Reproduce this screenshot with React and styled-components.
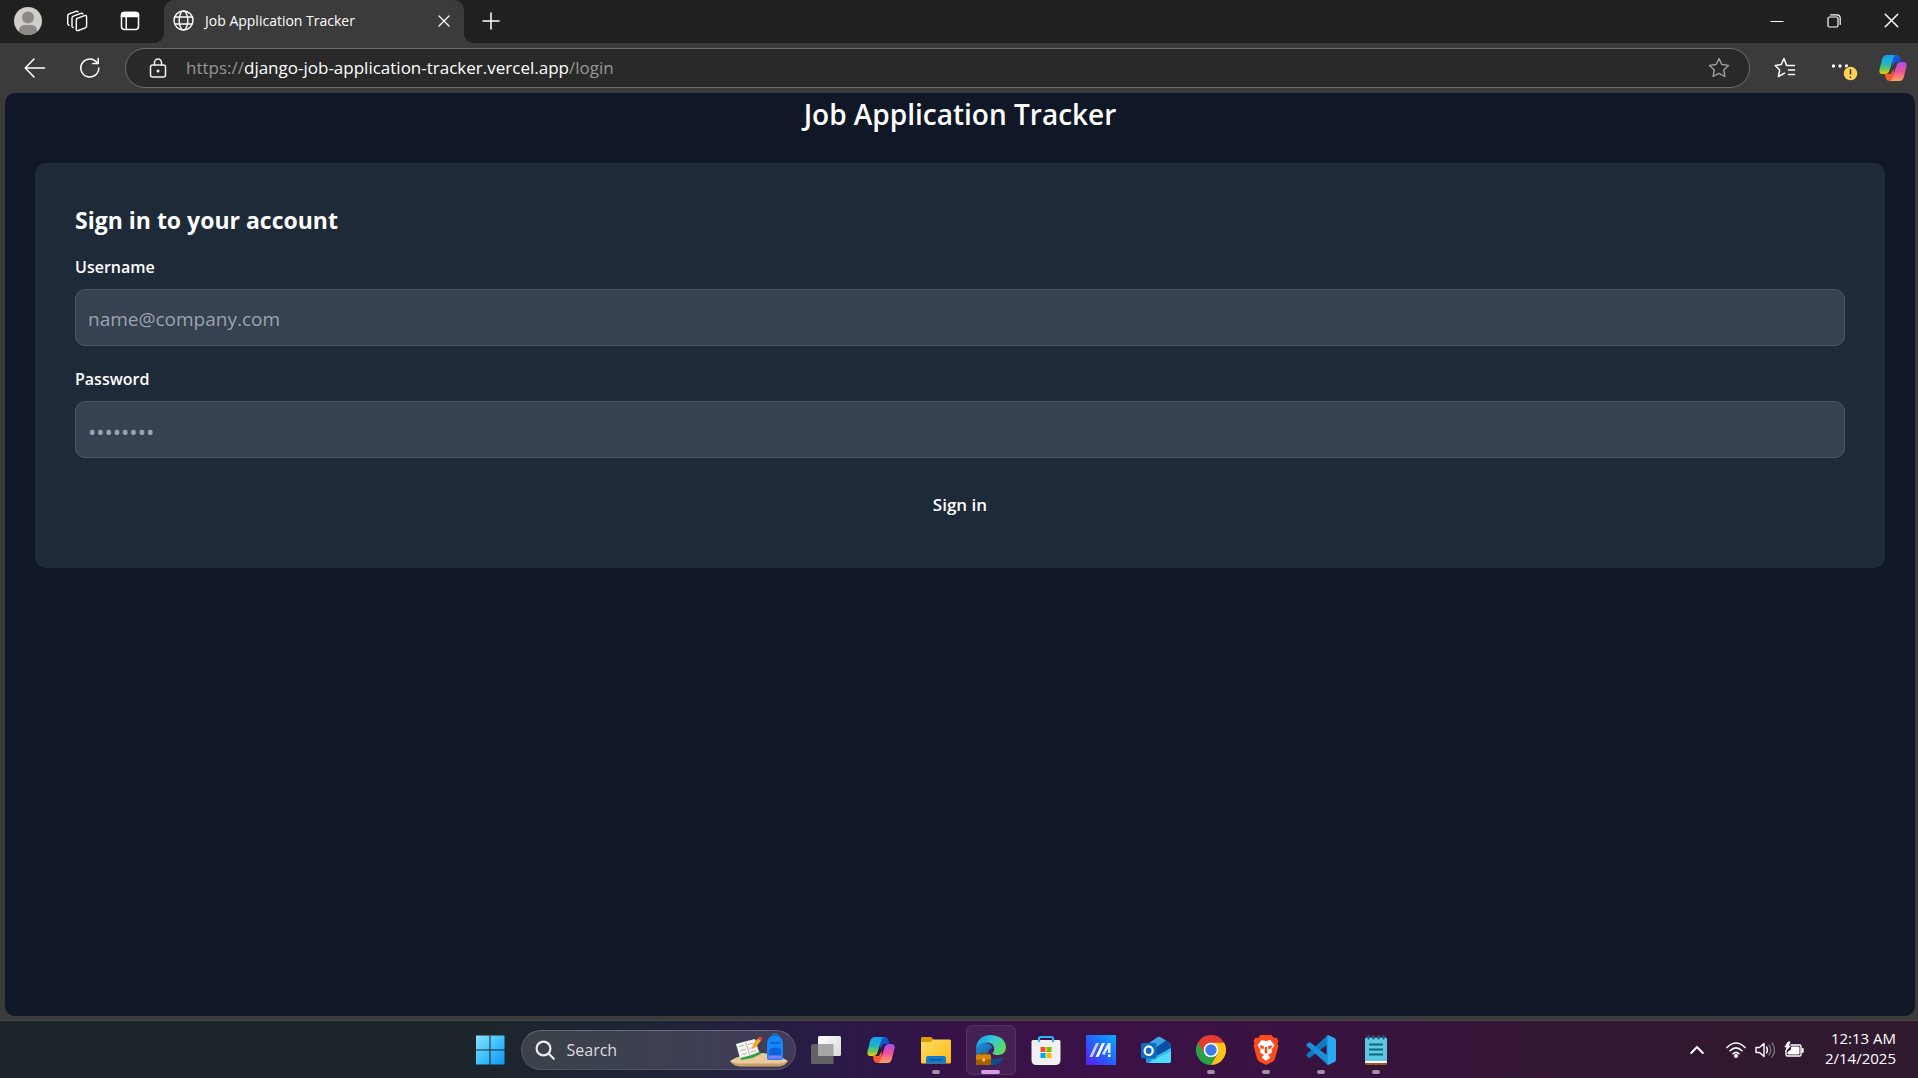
import React from "react";
import styled, { createGlobalStyle } from "styled-components";

const GlobalStyle = createGlobalStyle`
  *, *::before, *::after { box-sizing: border-box; }
  body {
    margin: 0;
    background: #3b3b3b;
    color: #fff;
    font-family: "Open Sans", "Noto Sans", sans-serif;
  }
  button, input { font: inherit; color: inherit; }
  svg { display: block; flex: none; }
`;

const Desktop = styled.div`
  display: flex;
  flex-direction: column;
  height: 100vh;
  overflow: hidden;
`;

/* ---------- Browser chrome ---------- */

const TabStrip = styled.header`
  display: flex;
  align-items: stretch;
  height: 43px;
  background: #202020;
`;

const ChromeButton = styled.button`
  display: grid;
  place-items: center;
  width: ${(p) => p.$width || 52}px;
  padding: 0;
  border: 0;
  background: transparent;

  ${TabStrip} & { padding-bottom: 2px; }
`;

const ProfileActions = styled.div`
  display: flex;
  padding: 0 4px 0 2px;
`;

const Tab = styled.div`
  position: relative;
  display: flex;
  align-items: center;
  width: 300px;
  padding: 0 9px 2px;
  gap: 11px;
  border-radius: 10px 10px 0 0;
  background: #3b3b3b;
  font-size: 14px;
  line-height: 20px;

  &::before,
  &::after {
    content: "";
    position: absolute;
    bottom: 0;
    width: 10px;
    height: 10px;
  }
  &::before {
    right: 100%;
    background: radial-gradient(circle at 0 0, transparent 10px, #3b3b3b 10px);
  }
  &::after {
    left: 100%;
    background: radial-gradient(circle at 100% 0, transparent 10px, #3b3b3b 10px);
  }
`;

const TabTitle = styled.span`
  flex: 1;
  white-space: nowrap;
`;

const TabClose = styled.button`
  display: grid;
  place-items: center;
  width: 22px;
  height: 22px;
  padding: 0;
  border: 0;
  background: transparent;
`;

const WindowControls = styled.div`
  display: flex;
  margin-left: auto;
`;

const Toolbar = styled.nav`
  display: flex;
  align-items: center;
  height: 50px;
  padding: 0 0 0 7px;

  & > button { height: 40px; }
`;

const AddressBar = styled.div`
  display: flex;
  flex: 1;
  align-items: center;
  height: 40px;
  margin-left: 8px;
  padding: 0 19px 0 23px;
  border: 1px solid #6b6b6b;
  border-radius: 20px;
  background: #292929;
`;

const Url = styled.a`
  flex: 1;
  margin-left: 19px;
  color: #969696;
  font-size: 17px;
  line-height: 24px;
  text-decoration: none;
  white-space: nowrap;
`;

const Host = styled.span`
  color: #fff;
`;

/* ---------- Web page ---------- */

const Page = styled.main`
  flex: 1;
  min-height: 0;
  margin: 0 3px 4px 5px;
  padding: 0 30px;
  border-radius: 10px;
  background: #101726;
`;

const SiteTitle = styled.h1`
  margin: 0 0 27px;
  font-size: 28px;
  font-weight: 600;
  line-height: 43px;
  text-align: center;
`;

const Card = styled.section`
  padding: 40px;
  border-radius: 10px;
  background: #1e2a38;
`;

const CardTitle = styled.h2`
  margin: 0 0 16px;
  font-size: 23px;
  font-weight: 700;
  line-height: 35px;
`;

const Form = styled.form`
  display: flex;
  flex-direction: column;
  gap: 20px;
`;

const Field = styled.div`
  display: flex;
  flex-direction: column;
  gap: 8px;
`;

const Label = styled.label`
  font-size: 16px;
  font-weight: 600;
  line-height: 27px;
`;

const Input = styled.input`
  width: 100%;
  height: 57px;
  padding: 2px 12px 0;
  border: 1px solid #4b5563;
  border-radius: 10px;
  background: #364152;
  font-size: ${(p) => (p.type === "password" ? 22 : 19)}px;
  line-height: 30px;
  outline: none;

  &::placeholder { color: #9ca3af; opacity: 1; }
`;

const SubmitButton = styled.button`
  width: 100%;
  height: 50px;
  padding: 2px 25px 0;
  border: 0;
  border-radius: 10px;
  background: transparent;
  font-size: 17px;
  font-weight: 600;
  line-height: 25px;
`;

/* ---------- Taskbar ---------- */

const Taskbar = styled.footer`
  display: flex;
  height: 58px;
  border-top: 1px solid #494449;
  background: linear-gradient(
    90deg,
    #1c242a 0%,
    #1c252b 25%,
    #20233a 36%,
    #2a1947 44%,
    #361248 50%,
    #3b1146 58%,
    #37133f 70%,
    #321730 84%,
    #2f1a2e 100%
  );
`;

const Spacer = styled.div`
  flex: 1 1 0;
`;

const AppRow = styled.div`
  display: flex;
  align-items: center;
  gap: 5px;
`;

const AppButton = styled.button`
  position: relative;
  display: grid;
  place-items: center;
  width: 50px;
  height: 50px;
  padding: 0;
  border: 1px solid ${(p) => (p.$active ? "#ffffff14" : "transparent")};
  border-radius: 6px;
  background: ${(p) => (p.$active ? "#ffffff12" : "transparent")};

  &::after {
    content: "";
    position: absolute;
    bottom: 0;
    display: ${(p) => (p.$running ? "block" : "none")};
    width: ${(p) => (p.$active ? 19 : 8)}px;
    height: 4px;
    border-radius: 2px;
    background: ${(p) => (p.$active ? "#da9ce5" : "#a08fa5")};
  }
`;

const SearchBox = styled.label`
  display: flex;
  align-items: center;
  width: 275px;
  height: 40px;
  padding: 0 7px 0 13px;
  gap: 12px;
  border: 1px solid #ffffff1c;
  border-top-color: #ffffff38;
  border-radius: 20px;
  background: #ffffff22;
`;

const SearchInput = styled.input`
  flex: 1;
  min-width: 0;
  padding: 0;
  border: 0;
  background: transparent;
  font-size: 16px;
  line-height: 24px;
  outline: none;

  &::placeholder { color: #dcdcde; opacity: 1; }
`;

const Tray = styled.div`
  display: flex;
  flex: 1 1 52px;
  align-items: center;
  justify-content: flex-end;
  padding-right: 22px;
`;

const TrayButton = styled.button`
  display: flex;
  align-items: center;
  height: 40px;
  padding: 0 11px;
  gap: 9px;
  border: 0;
  background: transparent;
`;

const Clock = styled.time`
  margin-left: 10px;
  padding-bottom: 3px;
  font-size: 15px;
  line-height: 20px;
  text-align: right;
  white-space: nowrap;
`;

/* ---------- Icons ---------- */

const Line = ({ w, h = w, box, stroke = "#fff", sw = 1.5, children }) => (
  <svg width={w} height={h} viewBox={box || `0 0 ${w} ${h}`} fill="none" stroke={stroke} strokeWidth={sw} strokeLinecap="round" strokeLinejoin="round" aria-hidden="true">
    {children}
  </svg>
);

const AvatarIcon = () => (
  <svg width="28" height="28" viewBox="0 0 28 28" aria-hidden="true">
    <clipPath id="avatar"><circle cx="14" cy="14" r="14" /></clipPath>
    <g clipPath="url(#avatar)">
      <rect width="28" height="28" fill="#d0cecb" />
      <circle cx="14" cy="10.5" r="6" fill="#8c8884" />
      <path d="M5 28v-4q0-6 6-6h6q6 0 6 6v4z" fill="#8c8884" />
    </g>
  </svg>
);

const WorkspacesIcon = () => (
  <Line w={22} sw={1.4}>
    <path d="M10.6 8.6 18.6 5.6q2-.6 2 1.4v9q0 1.4-1.3 1.9l-7 2.6q-2 .7-2-1.4v-9q0-1.2 1.3-1.7z" />
    <path d="M7.2 17.6q-1.2-.2-1.2-1.7V8q0-1.4 1.4-1.9l7.6-2.8q1.3-.4 1.8.7" />
    <path d="M3 15.3q-1.3-.2-1.3-1.7V5.8q0-1.4 1.4-1.9l7-2.6q1.3-.4 1.9.5" />
  </Line>
);

const VerticalTabsIcon = () => (
  <Line w={20}>
    <rect x="1.5" y="1.5" width="17" height="17" rx="3" />
    <path d="M1.5 5.5V4q0-2.5 2.5-2.5h12q2.5 0 2.5 2.5v1.5z" fill="#fff" />
    <path d="M6.2 6v12" />
  </Line>
);

const GlobeIcon = () => (
  <Line w={21} sw={1.4}>
    <circle cx="10.5" cy="10.5" r="9.5" />
    <ellipse cx="10.5" cy="10.5" rx="4.3" ry="9.5" />
    <path d="M2 7h17M2 14h17" />
  </Line>
);

const CloseIcon = ({ size }) => (
  <Line w={size} box="0 0 12 12" sw={1.2}><path d="m1 1 10 10M11 1 1 11" /></Line>
);

const PlusIcon = () => <Line w={18}><path d="M9 1v16M1 9h16" /></Line>;
const MinimizeIcon = () => <Line w={14} sw={1.2}><path d="M1 7.5h12" /></Line>;
const RestoreIcon = () => (
  <Line w={14} sw={1.2}>
    <rect x="1" y="3" width="10" height="10" rx="1.5" />
    <path d="M3.5.8H10q3.2 0 3.2 3.2v6.5" />
  </Line>
);
const BackIcon = () => <Line w={22}><path d="M20.5 11h-19M10 2 1.2 11 10 20" /></Line>;
const ReloadIcon = () => (
  <Line w={22}>
    <path d="M19.8 11a9 9 0 1 1-3.2-6.9l2.2 2.3" />
    <path d="M19.2 1.5v5h-5.4" />
  </Line>
);
const LockIcon = () => (
  <Line w={18} h={20} stroke="#f0f0f0">
    <rect x="1.5" y="7" width="15" height="12" rx="2" />
    <path d="M5.5 7V4.5a3.5 3.5 0 0 1 7 0V7" />
    <circle cx="9" cy="13" r=".8" fill="#fff" />
  </Line>
);
const StarIcon = () => (
  <Line w={22} stroke="#a0a0a0" sw={1.4}>
    <path d="m11 1.5 2.9 6 6.6.9-4.8 4.6 1.2 6.5-5.9-3.1-5.9 3.1 1.2-6.5L1.5 8.4l6.6-.9z" />
  </Line>
);
const FavoritesIcon = () => (
  <Line w={22}>
    <path d="M12.5 8.2 10 1.5 7.2 7.5l-6 .9 4.5 4.6-1.3 6.5 6.2-3.3M13 8.5h7.5M14.5 13h6M14.5 17.5h6" />
  </Line>
);
const MoreIcon = () => (
  <svg width="28" height="26" viewBox="0 0 28 26" aria-hidden="true">
    <g fill="#fff"><circle cx="3.5" cy="11" r="1.7" /><circle cx="10" cy="11" r="1.7" /><circle cx="16.5" cy="11" r="1.7" /></g>
    <circle cx="20.5" cy="18.5" r="7.5" fill="#3b3b3b" />
    <circle cx="20.5" cy="18.5" r="6.8" fill="#ffd257" />
    <path d="M20.5 14.3v5.2M20.5 21.5v1.4" stroke="#3b3200" strokeWidth="1.5" />
  </svg>
);

const CopilotIcon = ({ id }) => (
  <svg width="28" height="28" viewBox="0 0 28 28" aria-hidden="true">
    <defs>
      <linearGradient id={`${id}a`} x1="0" y1="0" x2="0" y2="1"><stop stopColor="#199cf5" /><stop offset=".45" stopColor="#1db5c5" /><stop offset=".75" stopColor="#6dc75b" /><stop offset="1" stopColor="#f7c70b" /></linearGradient>
      <linearGradient id={`${id}b`} x1="0" y1="0" x2="0" y2="1"><stop stopColor="#a64df0" /><stop offset=".5" stopColor="#ef5098" /><stop offset="1" stopColor="#ffa35c" /></linearGradient>
      <linearGradient id={`${id}c`} x1="0" y1="0" x2="1" y2="1"><stop stopColor="#0b67d8" /><stop offset="1" stopColor="#1c3fc8" /></linearGradient>
    </defs>
    <path d="M13 1h4.5q3 0 3.8 3l1 4h-6l-3 5z" fill={`url(#${id}c)`} />
    <path d="M15 27h-4.5q-3 0-3.8-3l-1-4h6l3-5z" fill="#f4592f" />
    <path d="M7.5 1h9q-1.5.6-2 2.5l-4 13q-1 3.5-4.5 3.5H3.5Q-.3 20 .5 15.500l2.500-10Q4.200 1 7.500 1z" fill={`url(#${id}a)`} />
    <path d="M20.5 27h-9q1.5-.6 2-2.5l4-13q1-3.500 4.500-3.500h2.500q3.800 0 3 4.500l-2.500 10q-1.200 4.500-4.500 4.500z" fill={`url(#${id}b)`} />
  </svg>
);

const WindowsIcon = () => (
  <svg width="30" height="30" viewBox="0 0 30 30" aria-hidden="true">
    <linearGradient id="win" x1="0" y1="0" x2="30" y2="30" gradientUnits="userSpaceOnUse"><stop stopColor="#8be3ff" /><stop offset=".5" stopColor="#3ec0fb" /><stop offset="1" stopColor="#0a93f5" /></linearGradient>
    <path d="M0 .5h13.500V14.500H0zM14.500.5h14v14h-14zM0 15.500h13.500v14H0zM14.500 15.500h14v14h-14z" fill="url(#win)" />
  </svg>
);

const SearchIcon = () => (
  <Line w={20} stroke="#ececee" sw={2.2}><circle cx="8.5" cy="8.5" r="6.9" /><path d="m13.8 13.8 5 5" /></Line>
);

const StudyArt = () => (
  <svg width="58" height="34" viewBox="0 0 58 34" aria-hidden="true">
    <path d="M0 28q13-8 29-8t29 8q-3 4-9 4.500H10Q3 32 0 28z" fill="#ecc99a" />
    <path d="M1 29q5 1.500 9 1.500h38q6 0 9-2-2 4.500-8 5H10Q4 33 1 29z" fill="#c9a06c" />
    <path d="m7 12 4 15 11-2 9-4-1-3z" fill="#2f9e44" />
    <path d="m6 11 9-2.500L25 6l4 13-9 3.500L10 25z" fill="#f6f5f0" />
    <path d="m15.500 8.500 4.500 14M9 13.500l5-1.300M10.500 17.500l5-1.300M12 21.500l5-1.300M18 11.500l5-1.500M19.500 15.500l5-1.500M21 19l5-1.500" stroke="#b5b5b5" />
    <path d="m22 16 1-5 5-5.500 3 2-5 6.500z" fill="#f5a623" />
    <path d="m28 5.500 1.500-2.200 3 2-1.500 2.200z" fill="#ef4444" />
    <path d="M41.500 5q0-4 3.500-4t3.500 4" fill="none" stroke="#1673d1" strokeWidth="1.500" />
    <path d="M37 25V11q0-8.500 8-8.500t8 8.500v14q0 2-2 2H39q-2 0-2-2z" fill="#1687f7" />
    <path d="M39 19q0-4.500 6-4.500t6 4.500v5H39z" fill="#0c63e0" />
    <path d="M38.500 22.500h13v3h-13z" fill="#8e7bf5" />
    <path d="M40 10h10" stroke="#0a58c8" strokeWidth="1.500" />
  </svg>
);

const TaskViewIcon = () => (
  <svg width="30" height="30" viewBox="0 0 30 30" aria-hidden="true">
    <linearGradient id="tv" x1="0" y1="0" x2="1" y2="1"><stop stopColor="#fff" /><stop offset="1" stopColor="#d9d9d9" /></linearGradient>
    <rect x="0" y="9" width="22.5" height="20" rx="1.5" fill="#626264" />
    <rect x="7" y="1" width="23" height="20" rx="1.5" fill="url(#tv)" />
    <path d="M7 9h15.500v12H8.500Q7 21 7 19.500z" fill="#a6a6a8" />
  </svg>
);

const ExplorerIcon = () => (
  <svg width="30" height="30" viewBox="0 0 30 30" aria-hidden="true">
    <linearGradient id="fold" x1="0" y1="0" x2="1" y2="1"><stop stopColor="#ffdd67" /><stop offset="1" stopColor="#fcb913" /></linearGradient>
    <path d="M0 3.500Q0 2 1.500 2H10l3 3h15v10H0z" fill="#e09b00" />
    <path d="M0 7h9.500l3-2.500H28.500Q30 4.500 30 6v21q0 1.500-1.500 1.500h-27Q0 28.500 0 27z" fill="url(#fold)" />
    <path d="M5 28.500V23q0-2 2-2h16q2 0 2 2v5.500z" fill="#1279d0" />
    <path d="M9 24.800h12" stroke="#0a4f95" strokeWidth="1.3" />
  </svg>
);

const EdgeIcon = () => (
  <svg width="30" height="30" viewBox="0 0 30 30" aria-hidden="true">
    <defs>
      <linearGradient id="edgeA" x1="0" y1=".2" x2="1" y2=".6"><stop stopColor="#1b9be0" /><stop offset=".5" stopColor="#35c8d8" /><stop offset="1" stopColor="#62dc55" /></linearGradient>
      <linearGradient id="edgeB" x1="0" y1="0" x2="1" y2="1"><stop stopColor="#1c8fd6" /><stop offset="1" stopColor="#0c4a92" /></linearGradient>
    </defs>
    <path d="M0 15Q1 7 10 8q6 1 6 5-5 2-3.500 7 2.500 5 9 4 3.500-.5 6.500-2-4 8-13 8Q0 29 0 15z" fill="url(#edgeB)" />
    <path d="M0 14Q1 0 15 0q14 1 15 12 0 7-7.500 8-5.500 0-6-2 2.200-1.800 1.500-5.500Q17 7.500 10.500 7.500 3 7.500 0 14z" fill="url(#edgeA)" />
    <path d="M16 12q-5 2.500-3.500 8 3 5.500 9.500 4.500 3-.5 6-2-3.500 7.500-12.500 7.500-7-5-3.500-13 1-3.500 4-5z" fill="#0d4b8f" />
    <path d="M5 20v-2h5v2" fill="none" stroke="#8a4a08" strokeWidth="1.5" />
    <rect x="0" y="19.5" width="15" height="10.5" rx="1" fill="#d98309" />
    <path d="M0 24.500h15V29q0 1-1 1H1q-1 0-1-1z" fill="#a75c06" />
    <rect x="6.5" y="23.5" width="2.5" height="3" fill="#ffd34d" />
  </svg>
);

const StoreIcon = () => (
  <svg width="30" height="30" viewBox="0 0 30 30" aria-hidden="true">
    <path d="M8 7V3.500Q8 2 9.500 2h11Q22 2 22 3.500V7" fill="none" stroke="#2eb2f2" strokeWidth="2.2" />
    <path d="M.5 6.500q0-1.500 1.500-1.500h26q1.500 0 1.500 1.500V25q0 5-5 5h-19q-5 0-5-5z" fill="#f0f0f0" />
    <path d="M9.500 12h5v5h-5z" fill="#f25022" /><path d="M15.500 12h5v5h-5z" fill="#7fba00" />
    <path d="M9.500 18h5v5h-5z" fill="#00a4ef" /><path d="M15.500 18h5v5h-5z" fill="#ffb900" />
    <path d="M8 5v2M22 5v2" stroke="#2eb2f2" strokeWidth="2.2" />
  </svg>
);

const MyAsusIcon = () => (
  <svg width="30" height="30" viewBox="0 0 30 30" aria-hidden="true">
    <linearGradient id="asus" x1="0" y1="1" x2="1" y2="0"><stop stopColor="#5a1bf5" /><stop offset=".5" stopColor="#2464fa" /><stop offset="1" stopColor="#08adfb" /></linearGradient>
    <path d="M0 0h30v30H0z" fill="url(#asus)" />
    <path d="m3.500 22 6.500-14h3L6.500 22z" fill="#c9cffc" />
    <path d="m9.500 22 6.500-14h3L12.500 22z" fill="#fff" />
    <path d="m16 19 6-11h2.500v10H22v-4.500L18.500 20z" fill="#e3e6ff" />
    <path d="M22 19.500h2.500V22H22z" fill="#fff" />
  </svg>
);

const OutlookIcon = () => (
  <svg width="30" height="30" viewBox="0 0 30 30" aria-hidden="true">
    <path d="M5 10 17 2q1-.6 2 0l10 6q1 .8 1 2v16q0 2-2 2H7q-2 0-2-2z" fill="#1473c4" />
    <path d="M5 10 17 2q1-.6 2 0l6 3.500L8 17z" fill="#3ea3e4" />
    <path d="m25 5.500 4 2.500q1 .8 1 2v3L15 22l-7-4z" fill="#0c4fa6" />
    <path d="M30 13v13q0 2-2 2H8l4-5z" fill="#4fdcfa" />
    <path d="M7 28 30 16v-3L15 21.500H5V26q0 2 2 2z" fill="#2ca5e9" opacity=".7" />
    <rect x="0" y="8" width="15.5" height="15.5" rx="1.5" fill="#0f6cbd" />
    <ellipse cx="7.7" cy="15.7" rx="4" ry="4.3" fill="none" stroke="#fff" strokeWidth="2.2" />
  </svg>
);

const ChromeIcon = () => (
  <svg width="30" height="30" viewBox="0 0 30 30" aria-hidden="true">
    <path d="M15 15 2 7.500A15 15 0 0 1 28 7.500z" fill="#e53c31" />
    <path d="M2 7.500A15 15 0 0 0 15 30l6.500-11.500L15 15z" fill="#2c9f48" />
    <path d="M28 7.500A15 15 0 0 1 15 30l6.500-11.500L15 7.500z" fill="#fcc31b" />
    <path d="M2 7.500 8.500 18.700 15 8h13l-.3-.5z" fill="#e53c31" />
    <circle cx="15" cy="15" r="7.3" fill="#fff" />
    <circle cx="15" cy="15" r="5.7" fill="#3b7de9" />
  </svg>
);

const BraveIcon = () => (
  <svg width="26" height="30" viewBox="0 0 26 30" aria-hidden="true">
    <path d="M7.500 0h11l2.500 3 2.500-.5 2 3.500-1 2.500 1 2.500-3.500 12.500q-.6 2-2.500 3.200L13 30l-6.500-3.300Q4.600 25.500 4 23.500L.5 11l1-2.500-1-2.500 2-3.500L5 3z" fill="#fb4a1c" />
    <path d="m8.500 5 4.500.9 4.500-.9 4 5.500-3 4 .5 3-4 2.500 2.500 2.500L13 25.800 8.500 22.500 11 20l-4-2.500.5-3-3-4z" fill="#fff" />
    <path d="m6.500 10 4.500 1.200-.5 3-2.500-.7zM19.500 10 15 11.200l.5 3 2.500-.7zM12 12h2l.5 5.500L13 18.700l-1.500-1.200z" fill="#fb4a1c" />
  </svg>
);

const CodeIcon = () => (
  <svg width="30" height="30" viewBox="0 0 30 30" aria-hidden="true">
    <path d="m22 0 6.500 3Q30 3.700 30 5.500v19q0 1.800-1.500 2.500L22 30l-1-5V5z" fill="#29a9f1" />
    <path d="M22 0 .8 19q-1 1 0 2l1.700 1.500q.8.7 1.800 0L22 9z" fill="#0f78be" />
    <path d="M22 30 .8 11q-1-1 0-2l1.700-1.500q.8-.7 1.800 0L22 21z" fill="#1c8fd8" />
    <path d="M22 0v30l-1.500-1V1z" fill="#1b93dc" />
  </svg>
);

const NotepadIcon = () => (
  <svg width="24" height="30" viewBox="0 0 24 30" aria-hidden="true">
    <path d="M1 25h22v3.500q0 1.500-1.500 1.500h-19Q1 30 1 28.500z" fill="#a4511a" />
    <path d="M1 25h22v2q0 1-1 1H2q-1 0-1-1z" fill="#f5f5f5" />
    <path d="M1 4q0-1.500 1.500-1.500h19Q23 2.500 23 4v22H1z" fill="#5ec8e2" />
    <path d="M5 9.500h14M5 14.500h14M5 19.500h14" stroke="#0d6580" strokeWidth="1.8" />
    <path d="M4.500 1v2.500M9.500 1v2.500M14.500 1v2.500M19.500 1v2.500" stroke="#14607a" strokeWidth="2.2" strokeLinecap="round" />
  </svg>
);

const ChevronIcon = () => <Line w={14} h={10} sw={1.9}><path d="M1.2 8 7 2l5.800 6" /></Line>;
const WifiIcon = () => (
  <Line w={20} h={18} sw={1.6}>
    <path d="M1 6.500q9-9 18 0M4 9.800q6-6 12 0M7 12.800q3-3 6 0" />
    <circle cx="10" cy="15" r="1.3" fill="#fff" />
  </Line>
);
const SpeakerIcon = () => (
  <Line w={20} h={18} sw={1.4}>
    <path d="M1 6.500h3.500L9 2.500v13L4.500 11.500H1z" />
    <path d="M11.500 6q2 3 0 6" />
    <path d="M14 4q3.500 5 0 10M17 2q5 7 0 14" stroke="#7b6a7d" />
  </Line>
);
const BatteryIcon = () => (
  <Line w={20} h={18} sw={1.4}>
    <path d="M7 4h8.500Q17 4 17 5.500v8q0 1.500-1.500 1.500h-12Q2 15 2 13.500V10" />
    <path d="M8 6h7v7H4v-2l3-2z" fill="#fff" strokeWidth="1" />
    <path d="M18.700 8v3" strokeWidth="2" />
    <path d="M4 1 .8 6h2l-1 4L6.500 5h-2L6 1z" fill="#fff" strokeWidth=".6" />
  </Line>
);

const apps = [
  { name: "Task View", icon: <TaskViewIcon /> },
  { name: "Copilot", icon: <CopilotIcon id="taskCopilot" /> },
  { name: "File Explorer", icon: <ExplorerIcon />, running: true },
  { name: "Microsoft Edge", icon: <EdgeIcon />, running: true, active: true },
  { name: "Microsoft Store", icon: <StoreIcon /> },
  { name: "MyASUS", icon: <MyAsusIcon /> },
  { name: "Outlook", icon: <OutlookIcon /> },
  { name: "Google Chrome", icon: <ChromeIcon />, running: true },
  { name: "Brave", icon: <BraveIcon />, running: true },
  { name: "Visual Studio Code", icon: <CodeIcon />, running: true },
  { name: "Notepad", icon: <NotepadIcon />, running: true },
];

export default function App() {
  return (
    <Desktop>
      <GlobalStyle />
      <TabStrip>
        <ProfileActions>
          <ChromeButton aria-label="Profile"><AvatarIcon /></ChromeButton>
          <ChromeButton $width={46} aria-label="Workspaces"><WorkspacesIcon /></ChromeButton>
          <ChromeButton $width={60} aria-label="Tab actions"><VerticalTabsIcon /></ChromeButton>
        </ProfileActions>
        <Tab>
          <GlobeIcon />
          <TabTitle>Job Application Tracker</TabTitle>
          <TabClose aria-label="Close tab"><CloseIcon size={12} /></TabClose>
        </Tab>
        <ChromeButton $width={54} aria-label="New tab"><PlusIcon /></ChromeButton>
        <WindowControls>
          <ChromeButton $width={54} aria-label="Minimize"><MinimizeIcon /></ChromeButton>
          <ChromeButton $width={60} aria-label="Restore"><RestoreIcon /></ChromeButton>
          <ChromeButton $width={54} aria-label="Close"><CloseIcon size={15} /></ChromeButton>
        </WindowControls>
      </TabStrip>

      <Toolbar>
        <ChromeButton $width={55} aria-label="Back"><BackIcon /></ChromeButton>
        <ChromeButton $width={55} aria-label="Refresh"><ReloadIcon /></ChromeButton>
        <AddressBar>
          <LockIcon />
          <Url href="#login">https://<Host>django-job-application-tracker.vercel.app</Host>/login</Url>
          <StarIcon />
        </AddressBar>
        <ChromeButton $width={70} aria-label="Favorites"><FavoritesIcon /></ChromeButton>
        <ChromeButton $width={48} aria-label="Settings and more"><MoreIcon /></ChromeButton>
        <ChromeButton $width={50} aria-label="Copilot"><CopilotIcon id="barCopilot" /></ChromeButton>
      </Toolbar>

      <Page>
        <SiteTitle>Job Application Tracker</SiteTitle>
        <Card>
          <CardTitle>Sign in to your account</CardTitle>
          <Form onSubmit={(e) => e.preventDefault()}>
            <Field>
              <Label htmlFor="username">Username</Label>
              <Input id="username" type="text" placeholder="name@company.com" />
            </Field>
            <Field>
              <Label htmlFor="password">Password</Label>
              <Input id="password" type="password" placeholder="••••••••" />
            </Field>
            <SubmitButton type="submit">Sign in</SubmitButton>
          </Form>
        </Card>
      </Page>

      <Taskbar>
        <Spacer />
        <AppRow>
          <AppButton aria-label="Start"><WindowsIcon /></AppButton>
          <SearchBox>
            <SearchIcon />
            <SearchInput type="text" placeholder="Search" aria-label="Search" />
            <StudyArt />
          </SearchBox>
          {apps.map((app) => (
            <AppButton key={app.name} aria-label={app.name} $running={app.running} $active={app.active}>
              {app.icon}
            </AppButton>
          ))}
        </AppRow>
        <Tray>
          <TrayButton aria-label="Show hidden icons"><ChevronIcon /></TrayButton>
          <TrayButton aria-label="Network, sound and battery">
            <WifiIcon />
            <SpeakerIcon />
            <BatteryIcon />
          </TrayButton>
          <Clock dateTime="2025-02-14T00:13">12:13 AM<br />2/14/2025</Clock>
        </Tray>
      </Taskbar>
    </Desktop>
  );
}
